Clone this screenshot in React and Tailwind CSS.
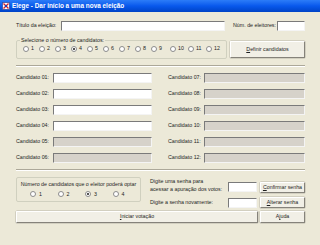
import React from "react";

const Radio = ({ checked }) => (
  <span className="flex h-[6px] w-[6px] shrink-0 items-center justify-center rounded-full border border-[#8c8c8c] bg-white">
    {checked && <span className="h-[2px] w-[2px] rounded-full bg-[#1a1a1a]" />}
  </span>
);

const Field = ({ className, disabled }) => (
  <div
    className={
      "h-[10px] border border-t-[#7a7a7a] border-l-[#7a7a7a] border-b-[#f4f4f4] border-r-[#f4f4f4] " +
      (disabled ? "bg-[#d6d2ca] " : "bg-white ") +
      className
    }
  />
);

const Btn = ({ className, children }) => (
  <div
    className={
      "flex items-center justify-center rounded-[1px] border border-t-white border-l-white border-b-[#85827a] border-r-[#85827a] bg-[#f1efe6] shadow-[0_0_0_0.5px_#b8b5a8] " +
      className
    }
  >
    {children}
  </div>
);

const Cand = ({ n, disabled, right }) => (
  <div className="flex h-[10px] items-center">
    <span className={right ? "w-[36px]" : "w-[37px]"}>Candidato {n}:</span>
    <Field disabled={disabled} className={right ? "w-[101px]" : "w-[99px]"} />
  </div>
);

export default function App() {
  const nums = [1, 2, 3, 4, 5, 6, 7, 8, 9, 10, 11, 12];
  return (
    <div className="h-[245px] w-[320px] overflow-hidden bg-[#ece9d8] font-['Liberation_Sans',Arial,sans-serif] text-[5.3px] leading-none text-[#1e1e1e]">
      {/* title bar */}
      <div className="flex h-[12px] items-center bg-linear-to-b from-[#2b7cf8] via-[#0858ec] to-[#0043c6] pl-[2px]">
        <svg width="8" height="8" viewBox="0 0 8 8" className="shrink-0">
          <rect x="0.5" y="0.5" width="7" height="7" fill="#ffffff" stroke="#3a4fa0" strokeWidth="0.8" />
          <path d="M1.5 1.5 L6.5 6.5 M6.5 1.5 L1.5 6.5" stroke="#d8222a" strokeWidth="1.4" />
          <rect x="3" y="3" width="2" height="2" fill="#1d3fb0" />
        </svg>
        <span className="ml-[2px] text-[6.4px] font-bold text-white">
          Elege - Dar início a uma nova eleição
        </span>
      </div>

      <div className="pl-[16px] pr-[15px]">
        {/* row 1 */}
        <div className="mt-[9px] flex h-[10px] items-center">
          <span className="w-[45px]">Título da eleição:</span>
          <Field className="w-[164px]" />
          <span className="ml-[8px] w-[44px]">Núm. de eleitores:</span>
          <Field className="w-[28px]" />
        </div>

        {/* row 2 */}
        <div className="mt-[6px] flex items-start">
          <fieldset className="h-[22px] w-[209px] rounded-[2px] border border-[#d0d0bf] pl-[6px] pr-[2px]">
            <legend className="ml-[-3px] px-[1px] leading-[6px]">Selecione o número de candidatos:</legend>
            <div className="mt-[3px] flex h-[6px] items-center">
              {nums.map((n) => (
                <div
                  key={n}
                  className={
                    "flex items-center " +
                    (n === 9 ? "w-[19px]" : n > 9 ? "w-[18px]" : "w-[16px]")
                  }
                >
                  <Radio checked={n === 4} />
                  <span className="ml-[2px]">{n}</span>
                </div>
              ))}
            </div>
          </fieldset>
          <Btn className="ml-auto mt-[4px] h-[17px] w-[75px]">
            <span>
              <span className="underline">D</span>efinir candidatos
            </span>
          </Btn>
        </div>

        {/* separator */}
        <div className="mt-[6px] h-px bg-[#aca899]" />
        <div className="h-px bg-white" />

        {/* candidates */}
        <div className="mt-[6px] flex">
          <div className="flex flex-col gap-[6px]">
            {["01", "02", "03", "04", "05", "06"].map((n, i) => (
              <Cand key={n} n={n} disabled={i > 3} />
            ))}
          </div>
          <div className="ml-auto flex flex-col gap-[6px]">
            {["07", "08", "09", "10", "11", "12"].map((n) => (
              <Cand key={n} n={n} disabled right />
            ))}
          </div>
        </div>

        {/* separator */}
        <div className="mt-[6px] h-px bg-[#aca899]" />
        <div className="h-px bg-white" />

        {/* bottom */}
        <div className="mt-[6px] flex items-start">
          <div className="flex h-[25px] w-[125px] flex-col items-center rounded-[2px] border border-[#d0d0bf]">
            <span className="mt-[4px]">Número de candidatos que o eleitor poderá optar</span>
            <div className="mt-[4px] flex h-[6px] w-full items-center pl-[13px]">
              {[1, 2, 3, 4].map((n) => (
                <div key={n} className="flex w-[28px] items-center">
                  <Radio checked={n === 3} />
                  <span className="ml-[3px]">{n}</span>
                </div>
              ))}
            </div>
          </div>

          <div className="ml-[9px] flex flex-1 flex-col">
            <div className="flex items-end">
              <div className="w-[78px] leading-[8px]">
                Digite uma senha para
                <br />
                acessar a apuração dos votos:
              </div>
              <Field className="mb-[1px] w-[29px]" />
              <Btn className="ml-auto h-[11px] w-[45px]">
                <span>
                  <span className="underline">C</span>onfirmar senha
                </span>
              </Btn>
            </div>
            <div className="mt-[4px] flex h-[11px] items-center">
              <span className="w-[78px]">Digite a senha novamente:</span>
              <Field className="w-[29px]" />
              <Btn className="ml-auto h-[11px] w-[45px]">
                <span>
                  <span className="underline">A</span>lterar senha
                </span>
              </Btn>
            </div>
          </div>
        </div>

        {/* buttons */}
        <div className="mt-[3px] flex h-[12px]">
          <Btn className="h-[12px] w-[242px]">
            <span>
              <span className="underline">I</span>niciar votação
            </span>
          </Btn>
          <Btn className="ml-auto h-[12px] w-[45px]">
            <span>
              A<span className="underline">j</span>uda
            </span>
          </Btn>
        </div>
      </div>
    </div>
  );
}
